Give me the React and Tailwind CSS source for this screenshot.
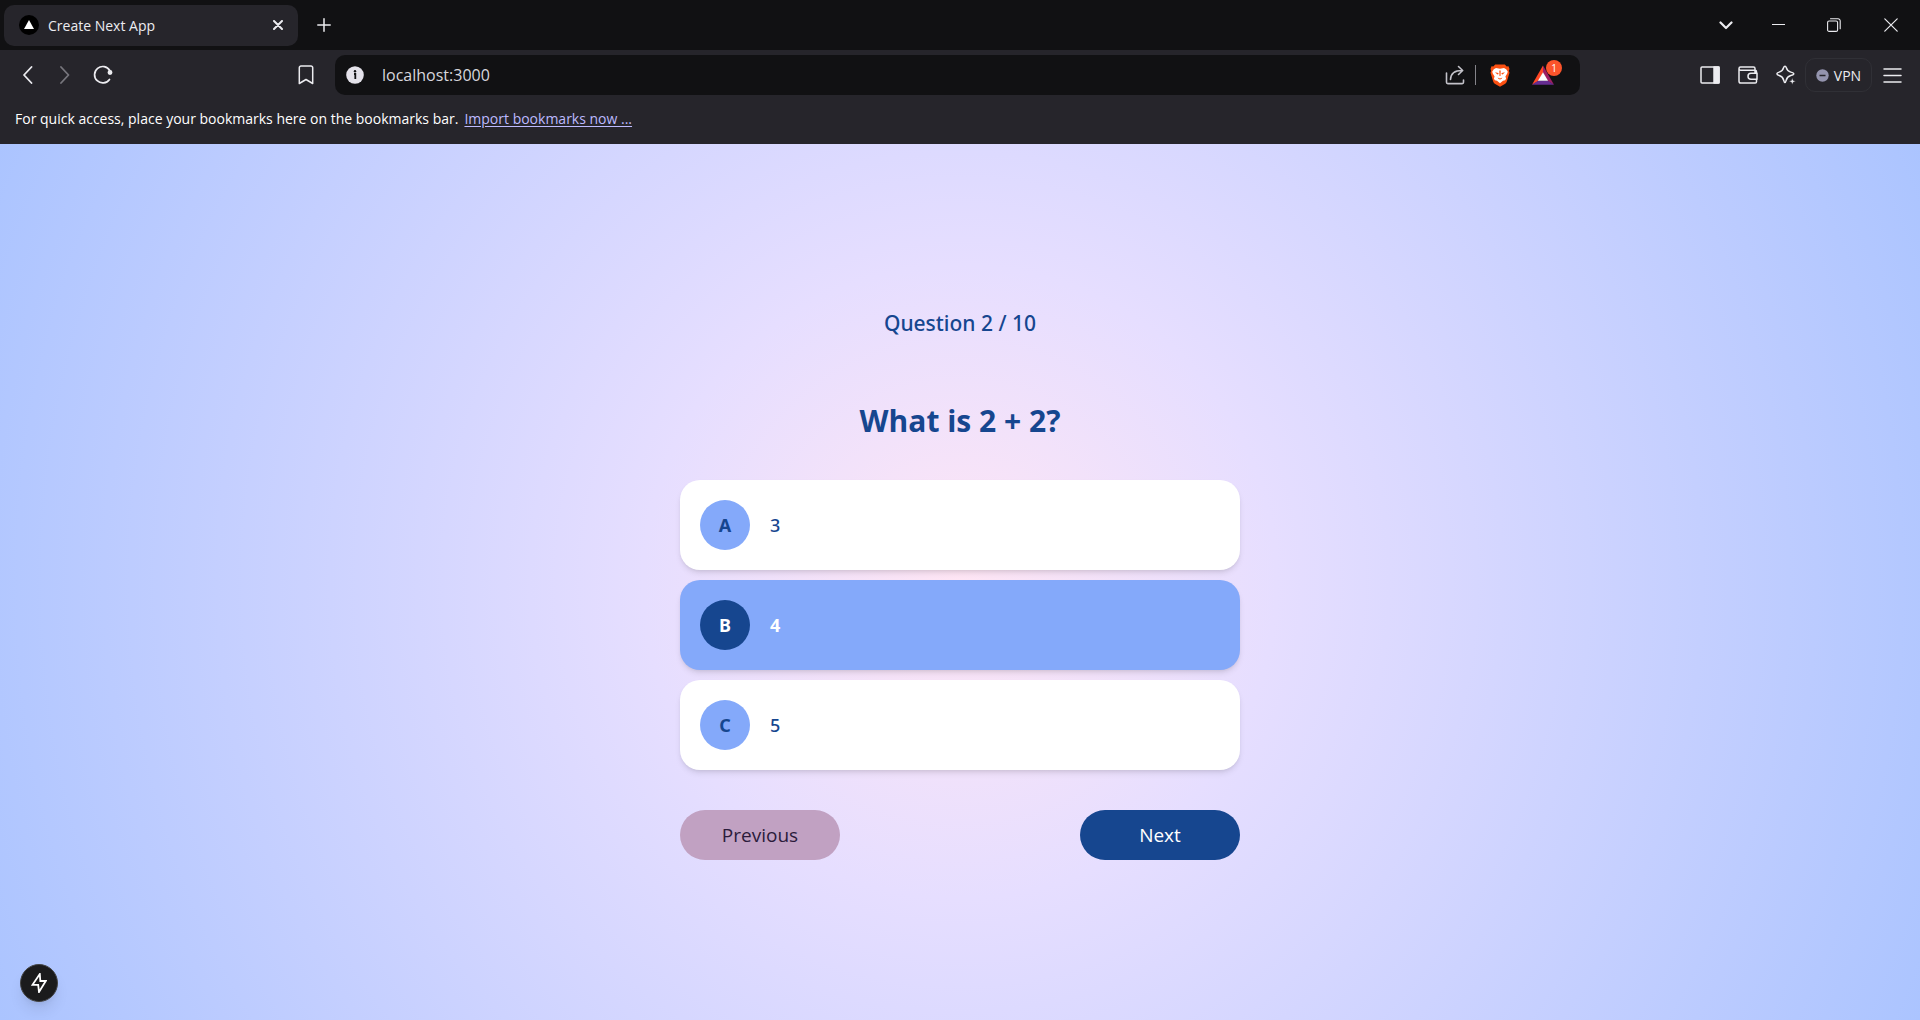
import { useState } from "react";

const icon = { fill: "none", stroke: "currentColor", strokeLinecap: "round", strokeLinejoin: "round" };

function IconButton({ label, className = "", children }) {
  return (
    <button type="button" aria-label={label} className={`flex shrink-0 items-center justify-center ${className}`}>
      {children}
    </button>
  );
}

function TabStrip() {
  return (
    <div className="flex h-[50px] items-center bg-[#111113] pl-1 text-[#ececf0]">
      <div className="flex h-[41px] w-[294px] items-center rounded-[10px] bg-[#26252b] pl-[15px] pr-3">
        <svg width="20" height="20" viewBox="0 0 20 20" aria-hidden="true">
          <circle cx="10" cy="10" r="10" fill="#000" />
          <path d="M10 5l5 9H5z" fill="#fff" />
        </svg>
        <span className="ml-[9px] grow text-[14px]">Create Next App</span>
        <IconButton label="Close tab" className="size-4">
          <svg width="10" height="10" viewBox="0 0 10 10" {...icon} strokeWidth="2">
            <path d="M1 1l8 8M9 1L1 9" />
          </svg>
        </IconButton>
      </div>
      <IconButton label="New tab" className="ml-[18px] size-4">
        <svg width="14" height="14" viewBox="0 0 14 14" {...icon} strokeWidth="1.5">
          <path d="M7 .8v12.4M.8 7h12.4" />
        </svg>
      </IconButton>
      <div className="ml-auto flex items-center">
        <IconButton label="Search tabs" className="w-12">
          <svg width="14" height="9" viewBox="0 0 14 9" {...icon} strokeWidth="2.2">
            <path d="M1.5 1.5L7 7l5.500-5.500" />
          </svg>
        </IconButton>
        <IconButton label="Minimize" className="w-14">
          <svg width="13" height="2" viewBox="0 0 13 2">
            <path d="M0 .5h13" stroke="currentColor" />
          </svg>
        </IconButton>
        <IconButton label="Restore" className="w-14">
          <svg width="14" height="14" viewBox="0 0 14 14" {...icon} strokeWidth="1.100">
            <rect x=".6" y="3" width="10" height="10.400" rx="1.500" />
            <path d="M3.500 .8h7.500a2.200 2.200 0 0 1 2.200 2.200v7.800" />
          </svg>
        </IconButton>
        <IconButton label="Close window" className="w-[58px]">
          <svg width="14" height="14" viewBox="0 0 14 14" {...icon} strokeWidth="1.200">
            <path d="M.8 .8l12.400 12.400M13.200 .8L.8 13.200" />
          </svg>
        </IconButton>
      </div>
    </div>
  );
}

function BraveLion() {
  return (
    <svg width="20" height="23" viewBox="0 0 20 23" aria-hidden="true">
      <path d="M5.200 .5h9.600l1.900 1.900 1.800-.2 1 2.700-.7 1.800.7 2-2.700 8.800c-.4 1.300-1 1.800-2 2.500L10 22.700 5.200 20c-1-.7-1.600-1.200-2-2.500L.5 8.700l.7-2-.7-1.800 1-2.700 1.800.2z" fill="#fb5012" />
      <path d="M6 4l4 .7L14 4l2.200 1.200 1.600 2.600-.7 2-1.700 2.700.7 1.900-.9 1.900-2.200.4L10 19.200l-3-2.500-2.200-.4-.9-1.900.7-1.900-1.700-2.700-.7-2 1.600-2.600z" fill="#fff" />
      <path d="M5 8.300l3.300.6.300 1-1.200.5zM15 8.300l-3.300.6-.3 1 1.200.5zM9.300 6.500h1.400l-.2 5.500h-1zM7.600 13.400l2.400 1 2.400-1-1 1.600-1.400.6-1.400-.6z" fill="#fb5012" />
    </svg>
  );
}

function Toolbar() {
  return (
    <div className="flex h-[50px] items-center bg-[#26252b] text-[#ececf0]">
      <IconButton label="Back" className="ml-[18px] w-5">
        <svg width="12" height="18" viewBox="0 0 12 18" {...icon} strokeWidth="1.800">
          <path d="M9.500 1L2 9l7.500 8" />
        </svg>
      </IconButton>
      <IconButton label="Forward" className="ml-[17px] w-5 text-[#77767d]">
        <svg width="12" height="18" viewBox="0 0 12 18" {...icon} strokeWidth="1.800">
          <path d="M2 1l7.500 8L2 17" />
        </svg>
      </IconButton>
      <IconButton label="Reload" className="ml-[18px] w-5">
        <svg width="20" height="20" viewBox="0 0 20 20" {...icon} strokeWidth="1.700">
          <path d="M16.500 14.400A8.200 8.200 0 1 1 16.800 5.500" />
          <circle cx="17" cy="7.500" r="1.600" fill="currentColor" />
        </svg>
      </IconButton>
      <IconButton label="Bookmark this page" className="ml-[183px] w-5">
        <svg width="16" height="20" viewBox="0 0 16 20" {...icon} strokeWidth="1.500">
          <path d="M3 1h10a1.700 1.700 0 0 1 1.700 1.700v15.800L8 14.500l-6.700 4V2.700A1.700 1.700 0 0 1 3 1z" />
        </svg>
      </IconButton>
      <div className="ml-[19px] flex h-10 grow items-center rounded-[10px] bg-[#111113] pl-[11px] pr-[26px]">
        <svg width="18" height="18" viewBox="0 0 18 18" aria-hidden="true">
          <circle cx="9" cy="9" r="8.800" fill="#e4e2ea" />
          <circle cx="9" cy="5.200" r="1.200" fill="#111113" />
          <path d="M8 8h1.300v5" stroke="#111113" strokeWidth="1.800" fill="none" />
        </svg>
        <input
          aria-label="Address"
          defaultValue="localhost:3000"
          className="ml-[18px] min-w-0 grow bg-transparent text-[16px] text-[#d8d7dd] outline-none"
        />
        <IconButton label="Share" className="text-[#c3c2c9]">
          <svg width="20" height="20" viewBox="0 0 20 20" {...icon} strokeWidth="1.600">
            <path d="M1.500 8v9.300c0 .8.500 1.300 1.300 1.300h14.400c.8 0 1.300-.5 1.300-1.300v-2.200M5.500 14.500c.2-5.500 3.500-9 11.500-9M13.500 1.500l4.200 4-4.200 4" />
          </svg>
        </IconButton>
        <div className="ml-[10px] h-5 w-px bg-[#85848a]" />
        <IconButton label="Brave Shields" className="ml-[14px]">
          <BraveLion />
        </IconButton>
        <IconButton label="Brave Rewards" className="relative ml-[22px]">
          <svg width="22" height="20" viewBox="0 0 24 21">
            <path d="M12 0L0 21l7-4 5-9z" fill="#ff4724" />
            <path d="M12 0l12 21-7-4-5-9z" fill="#9e1f63" />
            <path d="M0 21h24l-7-4.500H7z" fill="#662d91" />
            <path d="M12 7.500l5.500 9.300h-11z" fill="#fff" />
          </svg>
          <span className="absolute -right-2 -top-[5px] flex size-4 items-center justify-center rounded-full bg-[#fb542b] text-[10px] text-white">
            1
          </span>
        </IconButton>
      </div>
      <div className="ml-[120px] flex items-center pr-[18px]">
        <IconButton label="Sidebar">
          <svg width="20" height="18" viewBox="0 0 20 18" {...icon} strokeWidth="1.500">
            <rect x="1" y="1" width="18" height="16" rx="1" />
            <path d="M14 1h5v16h-5z" fill="currentColor" />
          </svg>
        </IconButton>
        <IconButton label="Wallet" className="ml-[18px]">
          <svg width="20" height="18" viewBox="0 0 20 18" {...icon} strokeWidth="1.500">
            <path d="M17 7V4.200H2.500C1.500 4.200 1 3.500 1 2.600S1.600 1 2.500 1h13c.8 0 1.500.6 1.500 1.500v1.700c1 0 1.500.6 1.500 1.500V7M1 2.600v12.600C1 16.300 1.700 17 2.800 17h14.400c.8 0 1.300-.5 1.300-1.300v-2.200" />
            <path d="M19 7.300h-6a3 3 0 0 0 0 6h6z" />
          </svg>
        </IconButton>
        <IconButton label="Leo AI" className="ml-[18px]">
          <svg width="20" height="20" viewBox="0 0 20 20" {...icon} strokeWidth="1.500">
            <path d="M9 1.200c.7 0 1 .5 1.200 1.200.8 3 1.600 3.900 4.600 4.700 1.600.4 3 .8 3 1.700s-1.400 1.300-3 1.700c-3 .8-3.800 1.700-4.600 4.700-.4 1.500-.6 2.300-1.200 2.300s-.9-.8-1.300-2.300c-.8-3-1.600-3.900-4.500-4.700C1.700 10.100.9 9.700.9 8.800s.8-1.300 2.300-1.700c2.900-.8 3.700-1.700 4.500-4.700.2-.7.600-1.200 1.300-1.200z" />
            <path d="M16.300 13l.9 2.400 2.400.9-2.400.9-.9 2.400-.9-2.400-2.400-.9 2.400-.9z" fill="currentColor" stroke="#26252b" strokeWidth=".4" />
          </svg>
        </IconButton>
        <button type="button" className="ml-[9px] flex h-[34px] w-[67px] items-center justify-center gap-[5px] rounded-[10px] border border-[#303036] text-[14px]">
          <svg width="13" height="13" viewBox="0 0 13 13" aria-hidden="true">
            <circle cx="6.500" cy="6.500" r="6.200" fill="#9494ae" />
            <path d="M3.500 6.500h6" stroke="#26252b" strokeWidth="1.500" />
          </svg>
          VPN
        </button>
        <IconButton label="Menu" className="ml-[11px]">
          <svg width="19" height="15" viewBox="0 0 19 15" {...icon} strokeWidth="1.500">
            <path d="M1 1h17M1 7.500h17M1 14h17" />
          </svg>
        </IconButton>
      </div>
    </div>
  );
}

function BookmarksBar() {
  return (
    <div className="flex h-11 items-start gap-[6px] bg-[#26252b] pl-[15px] pt-2 text-[14px] text-white">
      <span>For quick access, place your bookmarks here on the bookmarks bar.</span>
      <a href="#import" className="text-[#bdbaff] underline underline-offset-2">Import bookmarks now ...</a>
    </div>
  );
}

const options = [
  { letter: "A", text: "3" },
  { letter: "B", text: "4" },
  { letter: "C", text: "5" },
];

function Option({ letter, text, selected, onSelect }) {
  return (
    <button
      type="button"
      aria-pressed={selected}
      onClick={onSelect}
      className={`flex w-full items-center gap-5 rounded-[20px] p-5 text-left font-['Noto_Sans','Open_Sans',sans-serif] shadow-md ${
        selected ? "bg-[#84a9fa] font-bold text-white" : "bg-white font-medium text-[#16468f]"
      }`}
    >
      <span
        className={`flex size-[50px] items-center justify-center rounded-full text-[18px] font-bold ${
          selected ? "bg-[#16468f] text-white" : "bg-[#84a9fa] text-[#16468f]"
        }`}
      >
        {letter}
      </span>
      <span className="text-[18px]">{text}</span>
    </button>
  );
}

function Quiz() {
  const [choice, setChoice] = useState("B");
  return (
    <main className="relative flex grow flex-col items-center justify-center bg-[radial-gradient(circle,#ffe6f5,#e6deff_30%,#abc4ff)]">
      <div className="w-full max-w-[560px] text-[#16468f]">
        <p className="text-center font-['Noto_Sans','Open_Sans',sans-serif] text-[21px] leading-[38px] font-medium">Question 2 / 10</p>
        <h1 className="mt-[58px] text-center text-[30px] leading-[42px] font-bold">What is 2 + 2?</h1>
        <div className="mt-[38px] flex flex-col gap-[10px]">
          {options.map((o) => (
            <Option key={o.letter} {...o} selected={choice === o.letter} onSelect={() => setChoice(o.letter)} />
          ))}
        </div>
        <div className="mt-10 flex justify-between text-[19px]">
          <button type="button" className="h-[50px] w-40 rounded-full bg-[#c1a1c2] text-[#2b1b3b]">Previous</button>
          <button type="button" className="h-[50px] w-40 rounded-full bg-[#16468f] text-white">Next</button>
        </div>
      </div>
      <button
        type="button"
        aria-label="Open Next.js Dev Tools"
        className="absolute bottom-[18px] left-5 flex size-[38px] items-center justify-center rounded-full border border-[#444] bg-[#1b1b1c] text-white shadow-lg"
      >
        <svg width="16" height="20" viewBox="0 0 16 20" fill="none" stroke="currentColor" strokeWidth="1.800">
          <path d="M8.800 1L1.500 11.800h5.700L8 19l6.800-11H9.300z" />
        </svg>
      </button>
    </main>
  );
}

export default function App() {
  return (
    <div className="flex min-h-screen flex-col font-['Open_Sans',sans-serif]">
      <header>
        <TabStrip />
        <Toolbar />
        <BookmarksBar />
      </header>
      <Quiz />
    </div>
  );
}
